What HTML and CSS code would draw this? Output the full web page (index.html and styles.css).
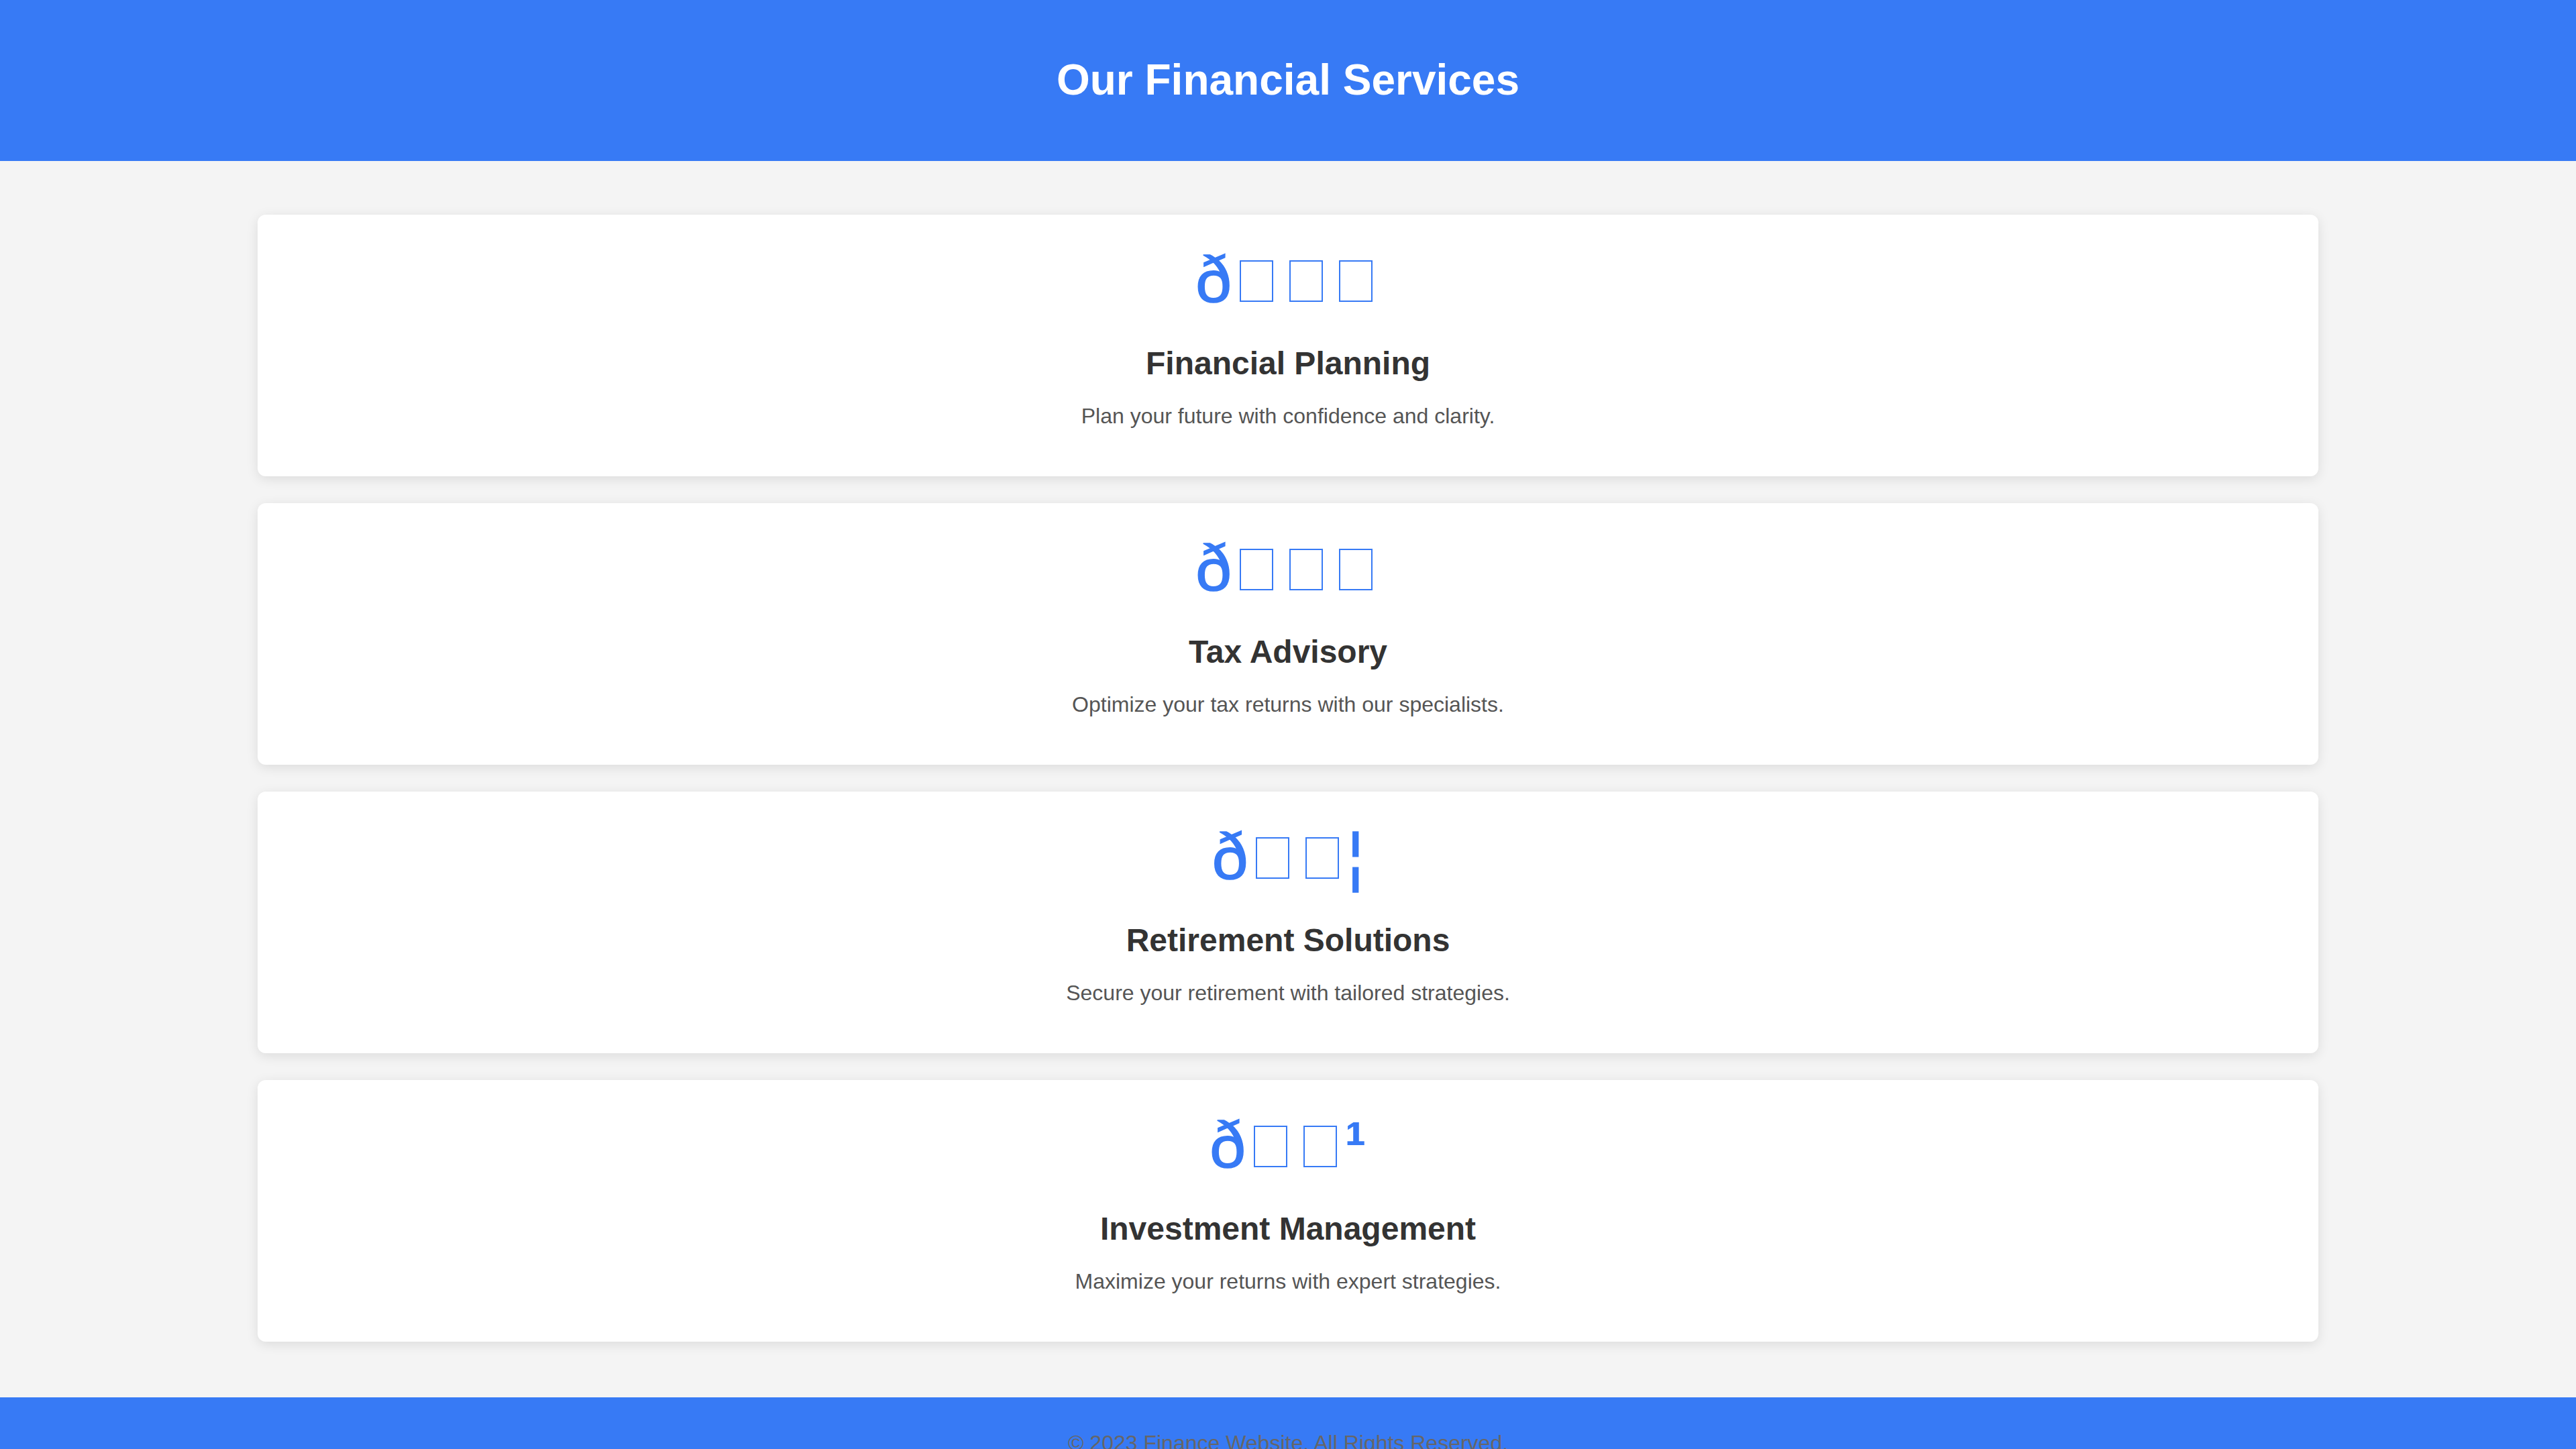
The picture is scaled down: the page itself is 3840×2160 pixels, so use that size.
FILE: index.html
```html
<!DOCTYPE html>
<html lang="en">
<head>
<meta charset="utf-8">
<title>Our Financial Services</title>
<link rel="stylesheet" href="styles.css">
</head>
<body>
<header class="site-header">
  <h1 class="site-title">Our Financial Services</h1>
</header>
<main class="services">
  <section class="service-card">
    <div class="service-icon">ð<span class="tofu"></span><span class="tofu"></span><span class="tofu"></span></div>
    <h3 class="service-name">Financial Planning</h3>
    <p class="service-desc">Plan your future with confidence and clarity.</p>
  </section>
  <section class="service-card">
    <div class="service-icon">ð<span class="tofu"></span><span class="tofu"></span><span class="tofu"></span></div>
    <h3 class="service-name">Tax Advisory</h3>
    <p class="service-desc">Optimize your tax returns with our specialists.</p>
  </section>
  <section class="service-card">
    <div class="service-icon">ð<span class="tofu"></span><span class="tofu"></span>¦</div>
    <h3 class="service-name">Retirement Solutions</h3>
    <p class="service-desc">Secure your retirement with tailored strategies.</p>
  </section>
  <section class="service-card">
    <div class="service-icon">ð<span class="tofu"></span><span class="tofu"></span><span class="sup">¹</span></div>
    <h3 class="service-name">Investment Management</h3>
    <p class="service-desc">Maximize your returns with expert strategies.</p>
  </section>
</main>
<footer class="site-footer">
  <p class="copyright">© 2023 Finance Website. All Rights Reserved.</p>
</footer>
</body>
</html>
```

FILE: styles.css
```css
html, body {
  margin: 0;
  padding: 0;
}
body {
  background: #f4f4f4;
  font-family: "Liberation Sans", Arial, sans-serif;
  line-height: 1.6;
  color: #333;
  text-align: center;
}
.site-header {
  background: #377af5;
  color: #fff;
  padding: 68px 0 69.6px;
}
.site-title {
  margin: 0;
  font-size: 64px;
  font-weight: bold;
  line-height: 1.6;
}
.services {
  display: flex;
  flex-direction: column;
  gap: 40px;
  padding: 80px 384px 83px;
}
.service-card {
  background: #fff;
  border-radius: 12px;
  box-shadow: 0 4px 18px rgba(0, 0, 0, 0.1);
  padding: 40px 40px 64px;
}
.service-icon {
  font-size: 96px;
  line-height: 114px;
  color: #377af5;
  white-space: nowrap;
  -webkit-text-stroke: 1.5px #377af5;
}
.sup {
  font-weight: bold;
  -webkit-text-stroke: 0;
}
.tofu {
  display: inline-block;
  box-sizing: border-box;
  width: 50px;
  height: 62px;
  margin: 0 12px;
  border: 2px solid #377af5;
  vertical-align: baseline;
}
.service-name {
  margin: 30px 0 14px;
  font-size: 48px;
  line-height: 1.6;
  font-weight: bold;
  color: #333;
}
.service-desc {
  margin: 0;
  font-size: 32px;
  line-height: 1.6;
  color: #555;
}
.site-footer {
  background: #377af5;
  padding: 43px 0 40px;
}
.copyright {
  margin: 0;
  font-size: 32px;
  line-height: 1.6;
  color: #666;
}
```
